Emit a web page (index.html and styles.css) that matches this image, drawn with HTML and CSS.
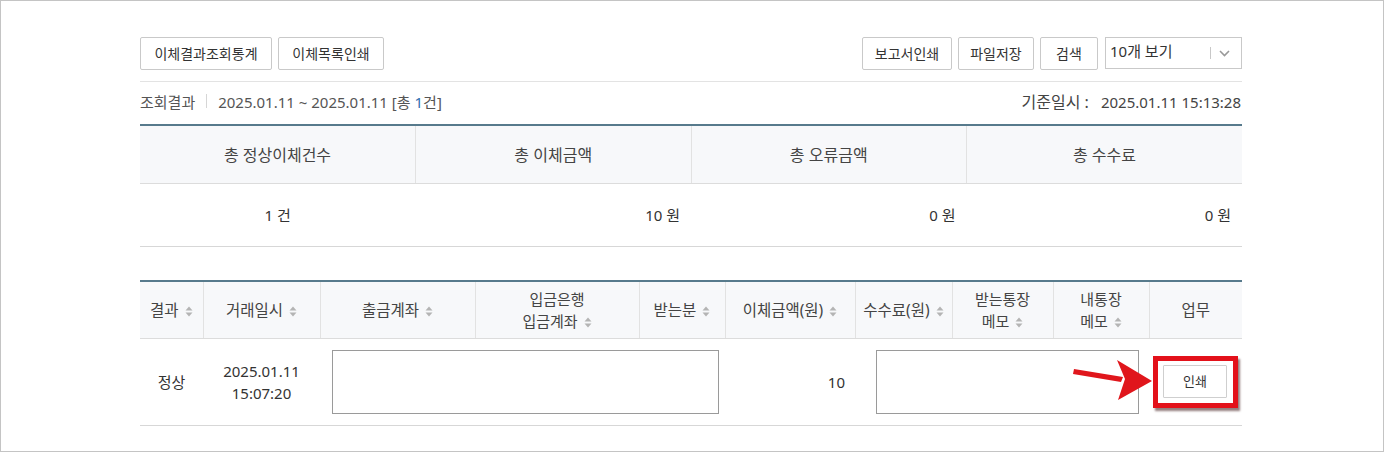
FILE: index.html
```html
<!DOCTYPE html>
<html lang="ko">
<head>
<meta charset="utf-8">
<link rel="stylesheet" href="styles.css">
</head>
<body>
<div class="frame">
  <div class="content">
    <div class="toolbar">
      <div class="btn-group">
        <button class="btn w132">이체결과조회통계</button>
        <button class="btn w106">이체목록인쇄</button>
      </div>
      <div class="btn-group">
        <button class="btn w90">보고서인쇄</button>
        <button class="btn w76">파일저장</button>
        <button class="btn w58">검색</button>
        <div class="select">
          <span class="select-text">10개 보기</span>
          <span class="select-sep"></span>
          <svg class="chev" width="11" height="7" viewBox="0 0 11 7"><path d="M1 1 L5.5 5.5 L10 1" fill="none" stroke="#999" stroke-width="1.6"/></svg>
        </div>
      </div>
    </div>

    <div class="info">
      <div class="info-left">
        <span class="info-label">조회결과</span>
        <span class="info-bar"></span>
        <span class="info-range">2025.01.11 ~ 2025.01.11 [총 <span class="blue">1</span>건]</span>
      </div>
      <div class="info-right"><span class="info-key">기준일시 :</span>2025.01.11 15:13:28</div>
    </div>

    <table class="summary">
      <thead>
        <tr>
          <th>총 정상이체건수</th>
          <th>총 이체금액</th>
          <th>총 오류금액</th>
          <th>총 수수료</th>
        </tr>
      </thead>
      <tbody>
        <tr>
          <td class="center">1 건</td>
          <td class="right">10 원</td>
          <td class="right">0 원</td>
          <td class="right">0 원</td>
        </tr>
      </tbody>
    </table>

    <table class="list">
      <colgroup>
        <col class="c1"><col class="c2"><col class="c3"><col class="c4"><col class="c5">
        <col class="c6"><col class="c7"><col class="c8"><col class="c9"><col class="c10">
      </colgroup>
      <thead>
        <tr>
          <th>결과 <svg class="sort" viewBox="0 0 8 11"><path d="M0.5 4.5 L4 0.5 L7.5 4.5Z M0.5 6.5 L7.5 6.5 L4 10.5Z"/></svg></th>
          <th>거래일시 <svg class="sort" viewBox="0 0 8 11"><path d="M0.5 4.5 L4 0.5 L7.5 4.5Z M0.5 6.5 L7.5 6.5 L4 10.5Z"/></svg></th>
          <th>출금계좌 <svg class="sort" viewBox="0 0 8 11"><path d="M0.5 4.5 L4 0.5 L7.5 4.5Z M0.5 6.5 L7.5 6.5 L4 10.5Z"/></svg></th>
          <th class="two"><div>입금은행</div><div>입금계좌 <svg class="sort" viewBox="0 0 8 11"><path d="M0.5 4.5 L4 0.5 L7.5 4.5Z M0.5 6.5 L7.5 6.5 L4 10.5Z"/></svg></div></th>
          <th>받는분 <svg class="sort" viewBox="0 0 8 11"><path d="M0.5 4.5 L4 0.5 L7.5 4.5Z M0.5 6.5 L7.5 6.5 L4 10.5Z"/></svg></th>
          <th>이체금액(원) <svg class="sort" viewBox="0 0 8 11"><path d="M0.5 4.5 L4 0.5 L7.5 4.5Z M0.5 6.5 L7.5 6.5 L4 10.5Z"/></svg></th>
          <th>수수료(원) <svg class="sort" viewBox="0 0 8 11"><path d="M0.5 4.5 L4 0.5 L7.5 4.5Z M0.5 6.5 L7.5 6.5 L4 10.5Z"/></svg></th>
          <th class="two"><div>받는통장</div><div>메모 <svg class="sort" viewBox="0 0 8 11"><path d="M0.5 4.5 L4 0.5 L7.5 4.5Z M0.5 6.5 L7.5 6.5 L4 10.5Z"/></svg></div></th>
          <th class="two"><div>내통장</div><div>메모 <svg class="sort" viewBox="0 0 8 11"><path d="M0.5 4.5 L4 0.5 L7.5 4.5Z M0.5 6.5 L7.5 6.5 L4 10.5Z"/></svg></div></th>
          <th>업무</th>
        </tr>
      </thead>
      <tbody>
        <tr>
          <td class="center">정상</td>
          <td class="center two-line"><div>2025.01.11</div><div>15:07:20</div></td>
          <td colspan="3" class="mask-a"><div class="mask"></div></td>
          <td class="right amount">10</td>
          <td colspan="3" class="mask-b"><div class="mask"></div></td>
          <td class="center">
            <div class="highlight"><button class="btn btn-sm">인쇄</button></div>
          </td>
        </tr>
      </tbody>
    </table>
  </div>

  <svg class="arrow" width="90" height="50" viewBox="0 0 90 50">
    <path d="M1 12 L50 20 L48 25 L0 17 Z" fill="#e0161c"/>
    <path d="M44 3 L79 24 L45 43 L52 22 Z" fill="#e0161c"/>
  </svg>
</div>
</body>
</html>
```

FILE: styles.css
```css
* { box-sizing: border-box; }

html, body {
  margin: 0;
  padding: 0;
  background: #fff;
}

body {
  font-family: "Noto Sans", "Noto Sans CJK KR", sans-serif;
  font-size: 15px;
  color: #333;
}

.frame {
  position: relative;
  width: 1384px;
  height: 452px;
  border: 1px solid #c4c4c4;
  overflow: hidden;
}

.content {
  width: 1102px;
  margin-left: 139px;
}

.toolbar {
  display: flex;
  justify-content: space-between;
  align-items: flex-start;
  padding-top: 36px;
  padding-bottom: 11px;
  border-bottom: 1px solid #e3e3e3;
}

.btn-group {
  display: flex;
  gap: 6px;
}

.btn {
  height: 33px;
  padding: 0;
  border: 1px solid #c9c9c9;
  border-radius: 2px;
  background: #fff;
  font-family: inherit;
  font-size: 14px;
  color: #333;
  line-height: 31px;
  text-align: center;
}

.w132 { width: 132px; }
.w106 { width: 106px; }
.w90 { width: 90px; }
.w76 { width: 76px; }
.w58 { width: 58px; }

.select {
  width: 137px;
  height: 32px;
  margin-left: 1px;
  border: 1px solid #c9c9c9;
  display: flex;
  align-items: center;
  padding-left: 4px;
  padding-right: 11px;
}

.select-text {
  flex: 1;
  font-size: 15px;
  color: #333;
  margin-top: -5px;
}

.select-sep {
  width: 1px;
  height: 12px;
  background: #c8c8c8;
  margin-right: 8px;
}

.chev { display: block; }

.info {
  height: 42px;
  display: flex;
  justify-content: space-between;
  align-items: center;
  padding-bottom: 4px;
  color: #555;
  font-size: 15px;
}

.info-left {
  display: flex;
  align-items: center;
}

.info-bar {
  width: 1px;
  height: 14px;
  background: #d6d6d6;
  margin: 0 11px 0 11px;
}

.blue { color: #2f6fb0; }

.info-right { color: #444; padding-right: 1px; }

.info-key {
  font-size: 16px;
  margin-right: 12px;
}

table {
  width: 1102px;
  border-collapse: collapse;
  table-layout: fixed;
}

.summary {
  border-top: 2px solid #577a8c;
  border-bottom: 1px solid #d7d7d7;
}

.summary th {
  height: 58px;
  background: #f7f8fa;
  font-weight: normal;
  font-size: 16px;
  color: #444;
  border-bottom: 1px solid #dcdcdc;
  border-left: 1px solid #e2e2e2;
  padding: 0;
}

.summary th:first-child { border-left: none; }

.summary td {
  height: 63px;
  padding: 0 11px;
  color: #333;
}

.center { text-align: center; }
.right { text-align: right; }

.list {
  margin-top: 33px;
  border-top: 2px solid #577a8c;
  border-bottom: 1px solid #d7d7d7;
}

.list .c1 { width: 63px; }
.list .c2 { width: 117px; }
.list .c3 { width: 155px; }
.list .c4 { width: 164px; }
.list .c5 { width: 86px; }
.list .c6 { width: 130px; }
.list .c7 { width: 97px; }
.list .c8 { width: 101px; }
.list .c9 { width: 96px; }
.list .c10 { width: 93px; }

.list th {
  height: 58px;
  background: #f7f8fa;
  font-weight: normal;
  font-size: 15.5px;
  color: #444;
  line-height: 22px;
  border-bottom: 1px solid #dcdcdc;
  border-left: 1px solid #e2e2e2;
  padding: 0;
  white-space: nowrap;
}

.list th.two { font-size: 15px; }
.list th.two div { line-height: 22px; }

.list th:first-child { border-left: none; }

.sort {
  display: inline-block;
  width: 8px;
  height: 11px;
  margin-left: 2px;
  vertical-align: -1px;
  fill: #b4b4b4;
}

.list td {
  height: 87px;
  padding: 0;
  color: #333;
  line-height: 22px;
}

.list td.amount { padding-right: 10px; }

.list td.mask-a { padding: 0 6px 0 12px; }
.list td.mask-b { padding: 0 10px 0 21px; }

.mask {
  height: 64px;
  border: 1px solid #9a9a9a;
  background: #fff;
}

.highlight {
  display: inline-block;
  width: 85px;
  height: 52px;
  border: 5px solid #e3111a;
  padding: 4px 0 0 5px;
  text-align: left;
  box-shadow: 2px 3px 2px rgba(60, 20, 20, 0.55);
  vertical-align: middle;
}

.btn-sm {
  width: 64px;
  height: 33px;
  padding: 0;
  font-size: 13px;
  border-color: #cfcfcf;
  border-radius: 1px;
}

.arrow {
  position: absolute;
  left: 1072px;
  top: 356px;
}
```
